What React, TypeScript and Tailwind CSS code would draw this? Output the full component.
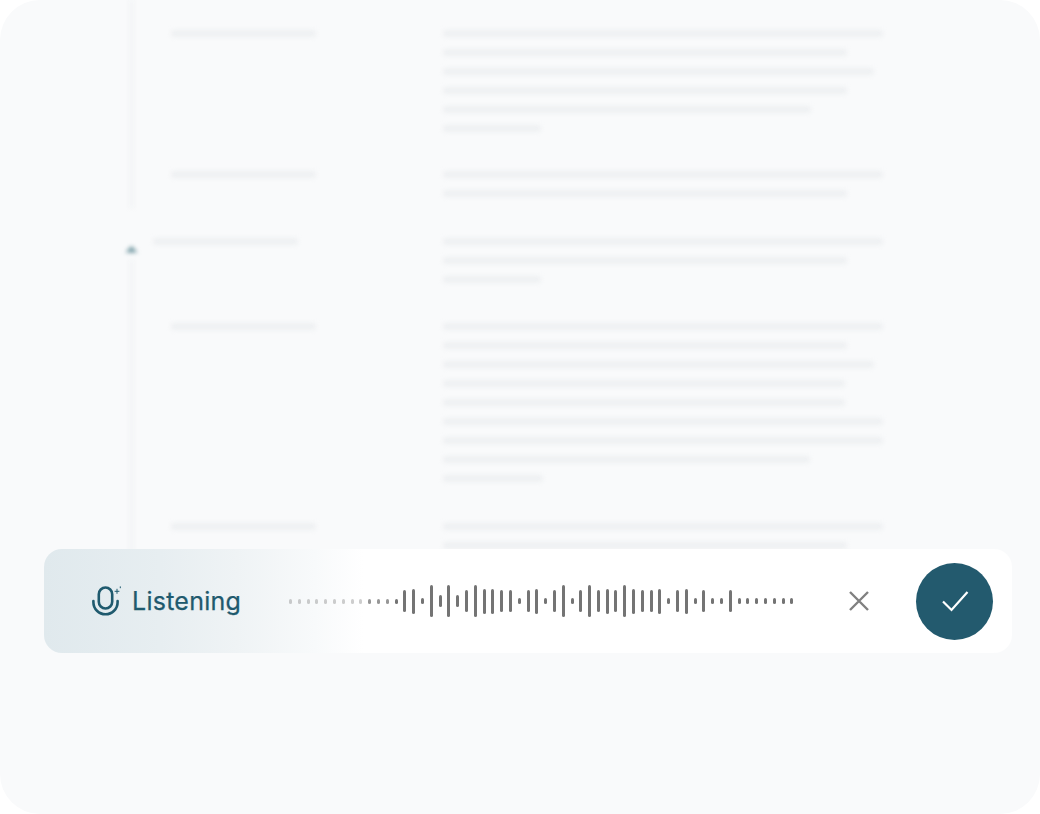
const SECTIONS = [
  { top: 33, indent: 171, lines: [883, 847, 874, 847, 811, 541] },
  { top: 174, indent: 171, lines: [883, 847] },
  { top: 241, indent: 153, lines: [883, 847, 541] },
  { top: 326, indent: 171, lines: [883, 847, 874, 845, 845, 883, 883, 810, 543] },
  { top: 526, indent: 171, lines: [883, 847, 883] },
];

// bar heights, left to right. 5 is a dot
const BARS = [
  5, 5, 5, 5, 5, 5, 5, 5, 5, 5, 5, 5, 5, 22, 25, 6, 32, 12, 32, 12, 22, 32, 25, 25, 22, 22, 6, 22, 25, 6,
  22, 32, 6, 22, 32, 22, 25, 22, 32, 25, 22, 22, 25, 6, 22, 25, 6, 22, 6, 6, 22, 6, 6, 6, 6, 6, 6, 6,
];

function DocLines() {
  return (
    <div className="absolute inset-0 blur-[2px]">
      <div className="absolute left-[130px] top-0 h-[208px] w-[3px] bg-[#f0f2f4]" />
      <svg className="absolute left-[124px] top-[243px]" width="15" height="11" viewBox="0 0 15 11" aria-hidden="true">
        <path d="M1.5 9.5 7.5 3l6 6.5z" fill="#6f969f" />
      </svg>
      <div className="absolute left-[130px] top-[260px] h-[300px] w-[3px] bg-[#f0f2f4]" />
      {SECTIONS.map((s) => (
        <div key={s.top} className="absolute left-0 right-0 grid grid-cols-[443px_1fr]" style={{ top: s.top - 3 }}>
          <div className="h-[7px] rounded-full bg-[#eef0f2]" style={{ marginLeft: s.indent, width: 145 }} />
          <div className="flex flex-col gap-[12px]">
            {s.lines.map((end, i) => (
              <div key={i} className="h-[7px] rounded-full bg-[#eef0f2]" style={{ width: end - 443 }} />
            ))}
          </div>
        </div>
      ))}
    </div>
  );
}

function MicIcon() {
  return (
    <svg width="30" height="31" viewBox="0 0 30 31" fill="none" stroke="#1f5a6e" strokeWidth="2.6" strokeLinecap="round" aria-hidden="true">
      <rect x="6.8" y="1.5" width="13.4" height="21" rx="6.7" />
      <path d="M1.4 15v1.2a12.1 12.1 0 0 0 24.2 0V15" />
      <path d="M25 3.2v4.2M23 5.3h4" strokeWidth="1" />
      <path d="M28.3.8v1" strokeWidth="1" />
    </svg>
  );
}

export default function App() {
  return (
    <div className="h-[814px] w-[1040px] overflow-hidden bg-white font-['Inter',sans-serif]">
      <div className="relative h-full w-full overflow-hidden rounded-[40px] bg-[#f9fafb]">
        <DocLines />
        <div className="absolute left-[44px] top-[549px] flex h-[104px] w-[968px] items-center rounded-[18px] bg-[linear-gradient(90deg,#e0e9ed_0%,#e7eef1_12%,#eff3f5_20%,#f8fafb_28%,#ffffff_33%)] pl-[48px] pr-[19px]">
          <MicIcon />
          <span className="ml-[10px] w-[110px] text-[25px] font-normal leading-none tracking-[0.25px] text-[#1f5a6e] [-webkit-text-stroke:0.25px_#1f5a6e]">Listening</span>
          <div className="ml-[47px] flex h-[40px] items-center gap-[5.8px] blur-[0.3px]">
            {BARS.map((h, i) => (
              <div
                key={i}
                className="w-[3px] rounded-full bg-[#747474]"
                style={{ height: h, opacity: i < 9 ? 0.35 : i < 12 ? 0.75 : 1 }}
              />
            ))}
          </div>
          <button className="ml-auto flex h-[24px] w-[24px] items-center justify-center text-[#808080]">
            <svg width="22" height="22" viewBox="0 0 22 22" fill="none" stroke="currentColor" strokeWidth="2.4" aria-hidden="true">
              <path d="M2 2l18 18M20 2 2 20" />
            </svg>
          </button>
          <button className="ml-[45px] flex h-[77px] w-[77px] items-center justify-center rounded-full bg-[#235a6e]">
            <svg width="28" height="22" viewBox="0 0 28 22" fill="none" stroke="#ffffff" strokeWidth="2.2" aria-hidden="true">
              <path d="M2 11.5 10.5 20 26.5 2" />
            </svg>
          </button>
        </div>
      </div>
    </div>
  );
}
